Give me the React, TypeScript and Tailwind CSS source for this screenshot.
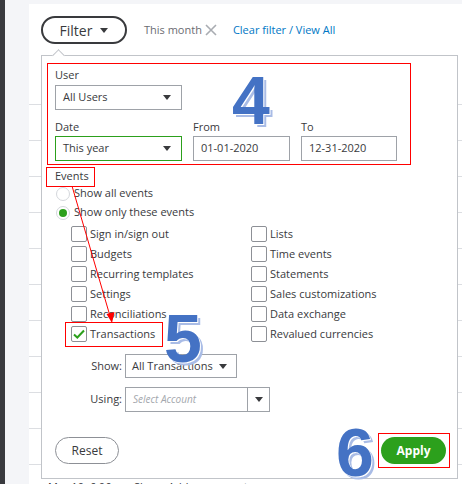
import React from "react";

const leftEvents = [
  "Sign in/sign out",
  "Budgets",
  "Recurring templates",
  "Settings",
  "Reconciliations",
  "Transactions",
];

const rightEvents = [
  "Lists",
  "Time events",
  "Statements",
  "Sales customizations",
  "Data exchange",
  "Revalued currencies",
];

const rows = Array.from({ length: 12 }, (_, i) => i);

function Caret() {
  return (
    <svg width="8" height="5" viewBox="0 0 8 5">
      <path d="M0 0h8L4 5z" fill="#393a3d" />
    </svg>
  );
}

function Checkbox({ label, checked }: { label: string; checked?: boolean }) {
  return (
    <div className="flex h-[20px] items-start gap-[3px]">
      <div className="flex h-[16px] w-[16px] items-center justify-center rounded-[2px] border border-[#8d9096] bg-white">
        {checked && (
          <svg width="12" height="10" viewBox="0 0 12 10">
            <path d="M1 5.5l3.3 3L11 1.5" fill="none" stroke="#2ca01c" strokeWidth="2" />
          </svg>
        )}
      </div>
      <span className="leading-[16px]">{label}</span>
    </div>
  );
}

function BigNumber({ value, className }: { value: string; className: string }) {
  return (
    <div
      className={
        "absolute font-['Liberation_Sans',Arial,sans-serif] text-[68px] font-bold leading-none text-[#4472c4] [text-shadow:1px_1px_0_#fff,3px_3px_0_#a9bce6] " +
        className
      }
    >
      {value}
    </div>
  );
}

export default function App() {
  return (
    <div className="relative flex h-[484px] w-[462px] overflow-hidden bg-[#f4f5f8] font-['Open_Sans',sans-serif] text-[11px] text-[#393a3d]">
      <div className="w-[5px] shrink-0 bg-[#393a3f]" />
      <div className="w-[24px] shrink-0" />
      <div className="relative mt-[4px] flex-1 bg-white">
        {/* filter bar */}
        <div className="flex items-center pl-[12px] pt-[12px]">
          <button className="flex h-[28px] w-[86px] items-center justify-center gap-[8px] rounded-full border-2 border-[#393a3d] text-[14px]">
            Filter
            <Caret />
          </button>
          <span className="ml-[17px] text-[#6b6c72]">This month</span>
          <svg className="ml-[3px]" width="12" height="12" viewBox="0 0 12 12">
            <path d="M1 1l10 10M11 1L1 11" stroke="#a9acb2" strokeWidth="1.6" />
          </svg>
          <span className="ml-[16px] text-[#0077c5]">Clear filter / View All</span>
        </div>

        {/* table behind the popover */}
        <div className="mt-[25px]">
          {rows.map((r) => (
            <div key={r} className="flex h-[36px] items-center border-b border-[#dcdee2] pl-[19px] pt-[10px] text-[#393a3d]">
              <span className="w-[120px]">Mar 10, 6:06 pm Sh</span>
              <span>Add an account</span>
            </div>
          ))}
        </div>

        {/* popover */}
        <div className="absolute left-[12px] top-[51px] w-[417px] border border-[#c1c4c9] bg-white pb-[14px] pl-[13px] pr-[11px] pt-[12px]">
          <div className="absolute -top-[5px] left-[12px] h-[9px] w-[9px] rotate-45 border-l border-t border-[#c1c4c9] bg-white" />

          <div className="h-[14px] leading-[14px]">User</div>
          <div className="mt-[3px] flex h-[25px] w-[127px] items-center justify-between border border-[#9ea2a8] pl-[7px] pr-[10px]">
            All Users
            <Caret />
          </div>

          <div className="mt-[10px] flex gap-[11px]">
            <div className="w-[127px]">
              <div className="h-[14px] leading-[14px]">Date</div>
              <div className="mt-[2px] flex h-[25px] items-center justify-between border border-[#2ca01c] pl-[7px] pr-[10px]">
                This year
                <Caret />
              </div>
            </div>
            <div className="w-[97px]">
              <div className="h-[14px] leading-[14px]">From</div>
              <div className="mt-[2px] flex h-[25px] items-center border border-[#9ea2a8] pl-[7px]">01-01-2020</div>
            </div>
            <div className="w-[96px]">
              <div className="h-[14px] leading-[14px]">To</div>
              <div className="mt-[2px] flex h-[25px] items-center border border-[#9ea2a8] pl-[7px]">12-31-2020</div>
            </div>
          </div>

          <div className="mt-[8px] h-[14px] leading-[14px]">Events</div>
          <div className="mt-[1px] flex h-[19px] items-center gap-[4px] pl-[1px]">
            <div className="h-[14px] w-[14px] rounded-full border border-[#d4d7dc]" />
            Show all events
          </div>
          <div className="flex h-[19px] items-center gap-[4px] pl-[1px]">
            <div className="flex h-[14px] w-[14px] items-center justify-center rounded-full border border-[#d4d7dc]">
              <div className="h-[8px] w-[8px] rounded-full bg-[#2ca01c]" />
            </div>
            Show only these events
          </div>

          <div className="mt-[4px] flex pl-[16px]">
            <div className="w-[180px]">
              {leftEvents.map((e) => (
                <Checkbox key={e} label={e} checked={e === "Transactions"} />
              ))}
            </div>
            <div>
              {rightEvents.map((e) => (
                <Checkbox key={e} label={e} />
              ))}
            </div>
          </div>

          <div className="mt-[8px] flex items-center pl-[35px]">
            <span className="w-[32px] text-right">Show:</span>
            <div className="ml-[3px] flex h-[24px] w-[112px] items-center justify-between border border-[#9ea2a8] pl-[6px] pr-[9px]">
              All Transactions
              <Caret />
            </div>
          </div>
          <div className="mt-[9px] flex items-center pl-[35px]">
            <span className="w-[32px] text-right">Using:</span>
            <div className="ml-[3px] flex h-[25px] w-[145px] items-center border border-[#9ea2a8]">
              <span className="flex-1 pl-[7px] text-[10px] italic text-[#a4a7ad]">Select Account</span>
              <div className="flex h-full w-[22px] items-center justify-center border-l border-[#9ea2a8]">
                <Caret />
              </div>
            </div>
          </div>

          <div className="mt-[25px] flex items-center justify-between">
            <button className="h-[27px] w-[64px] rounded-full border border-[#8d9096] text-[12px]">Reset</button>
            <button className="h-[27px] w-[65px] rounded-full bg-[#2ca01c] text-[12px] font-bold text-white">Apply</button>
          </div>
        </div>
      </div>

      {/* annotations */}
      <div className="pointer-events-none absolute left-[47px] top-[63px] h-[102px] w-[364px] border border-[#f00]" />
      <div className="pointer-events-none absolute left-[46px] top-[167px] h-[20px] w-[49px] border border-[#f00]" />
      <div className="pointer-events-none absolute left-[65px] top-[322px] h-[25px] w-[98px] border border-[#f00]" />
      <div className="pointer-events-none absolute left-[378px] top-[433px] h-[35px] w-[72px] border border-[#f00]" />
      <svg className="pointer-events-none absolute left-0 top-0" width="462" height="484">
        <line x1="72" y1="186" x2="110" y2="316" stroke="#f00" strokeWidth="1" />
        <path d="M112 323L106.5 314L114.5 312Z" fill="#f00" />
      </svg>
      <BigNumber value="4" className="left-[232px] top-[66px]" />
      <BigNumber value="5" className="left-[164px] top-[304px]" />
      <BigNumber value="6" className="left-[336px] top-[418px]" />
    </div>
  );
}
